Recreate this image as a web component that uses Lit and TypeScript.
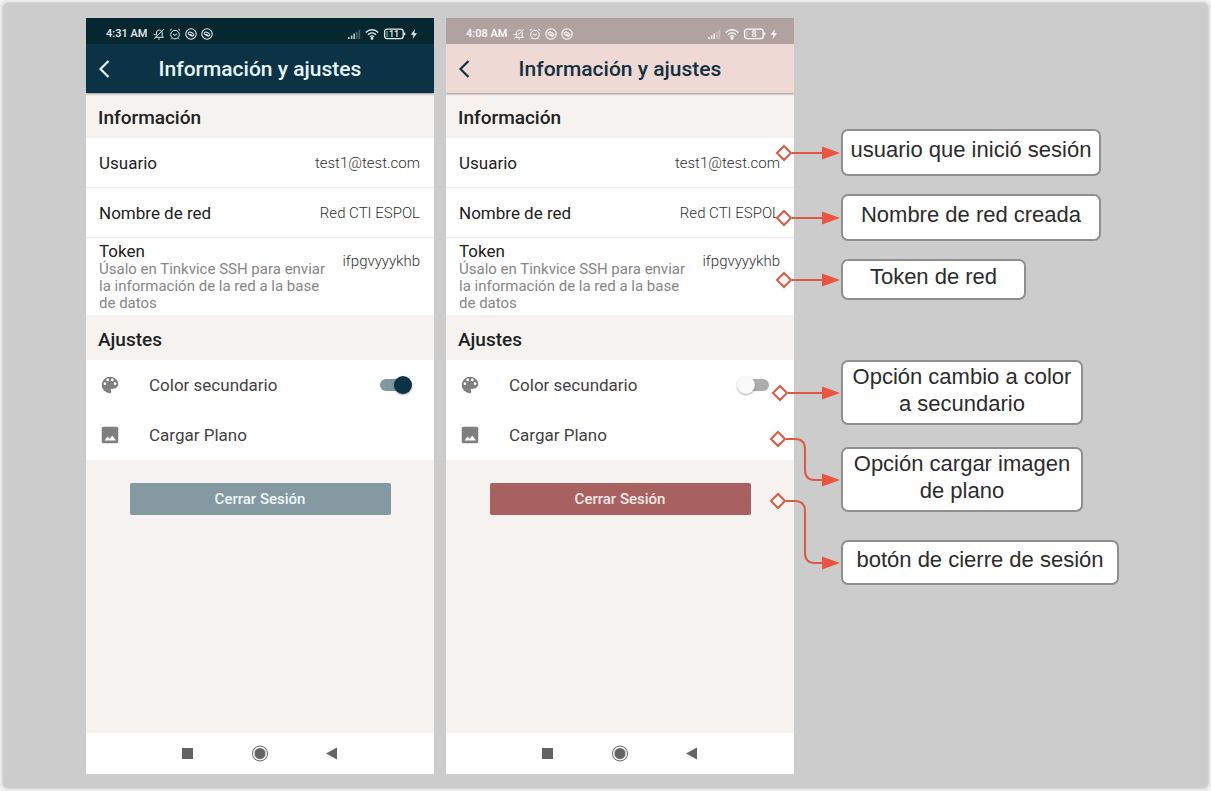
import { LitElement, html, svg, css } from "lit";
import { customElement, property } from "lit/decorators.js";
import { classMap } from "lit/directives/class-map.js";

@customElement("status-bar")
class StatusBar extends LitElement {
  @property() time = "";
  @property() battery = "";
  @property({ type: Boolean }) low = false;

  static styles = css`
    :host {
      display: flex;
      align-items: center;
      gap: 4px;
      height: 26px;
      box-sizing: border-box;
      padding: 6px 16px 0 20px;
      font: 500 11px/16px Roboto, sans-serif;
    }
    .time { margin-right: 2px; }
    .spacer { flex: 1; }
    svg { display: block; fill: none; stroke: currentColor; }
    .battery { font: 500 9px Roboto, sans-serif; }
    .battery text { fill: currentColor; stroke: none; }
  `;

  private shazam() {
    return html`<svg width="12" height="12" viewBox="0 0 12 12" stroke-width="1.1" aria-hidden="true">
      <circle cx="6" cy="6" r="5.2" />
      <path d="M3 5.400C3.800 3.400 6 3.400 9 6.400M9 6.600C8.200 8.800 6 8.600 3 5.600M5.200 5.800l2 2" />
    </svg>`;
  }

  render() {
    return html`
      <span class="time">${this.time}</span>
      <svg width="12" height="12" viewBox="0 0 12 12" aria-hidden="true">
        <path d="M2.200 9.300h8.200L9.200 7.800V5c0-1.600-1-2.800-2.600-3M3.400 7.400V5c0-1.600 1.200-3 3.200-3M5.200 11h1.600M1.200 10.600 10.800 1.200M.6 6.600h2" />
      </svg>
      <svg width="12" height="12" viewBox="0 0 12 12" aria-hidden="true">
        <circle cx="6" cy="6.600" r="4.300" />
        <path d="M4 6l2 1.300L8 5.800M.8 2.600 2.800.9M11.200 2.600 9.200.9M2.800 10.300l-1 1M9.200 10.300l1 1" />
      </svg>
      ${this.shazam()} ${this.shazam()}
      <span class="spacer"></span>
      <svg width="14" height="12" viewBox="0 0 14 12" stroke-width="1.600" aria-hidden="true">
        <path d="M1.800 9V11M4.600 7.600V11M7.200 5.600V11" opacity=".8" />
        <path d="M9.800 3.800V11M12.400 1.800V11" opacity=".3" />
      </svg>
      <svg width="14" height="12" viewBox="0 0 14 12" stroke-width="1.400" aria-hidden="true">
        <path d="M.8 4.400C4.400.9 9.600.9 13.200 4.400M3 6.700c2.300-2.200 5.700-2.200 8 0M5 8.800c1.200-1.100 2.800-1.100 4 0" />
        <circle cx="7" cy="10.400" r=".7" />
      </svg>
      <svg class="battery" width="23" height="12" viewBox="0 0 23 12" aria-hidden="true">
        <rect x="1.600" y="1.200" width="18.600" height="9.400" rx="2.400" stroke-width="1.300" />
        <path d="M21.600 4.600v2.600" stroke-width="1.400" />
        ${this.low ? svg`<path d="M4 3v6" stroke="#5fae5a" stroke-width="1.400" />` : svg`<path d="M4 3v6" stroke-opacity=".5" />`}
        <text x="11" y="9" text-anchor="middle">${this.battery}</text>
      </svg>
      <svg width="8" height="12" viewBox="0 0 8 12" aria-hidden="true">
        <path d="M5 1 .8 6.800h2.800L2.600 11 7 5.200H4.200z" fill="currentColor" stroke="none" />
      </svg>
    `;
  }
}

@customElement("phone-screen")
class PhoneScreen extends LitElement {
  @property() time = "";
  @property() battery = "";
  @property({ type: Boolean }) secondary = false;

  static styles = css`
    :host { display: block; }
    .phone {
      --status: #b2a29f;
      --status-ink: #ffffff;
      --bar: #eed9d5;
      --bar-ink: #14303f;
      --action: #a96060;
      --action-ink: #fbe9e6;
      display: flex;
      flex-direction: column;
      height: 100%;
      background: #f5f2f0;
      color: #212121;
      font-family: Roboto, sans-serif;
    }
    .phone.dark {
      --status: #062630;
      --status-ink: #e6eef0;
      --bar: #0c3345;
      --bar-ink: #e6f6fa;
      --action: #8499a2;
      --action-ink: #eef6f9;
    }
    status-bar { background: var(--status); color: var(--status-ink); }
    .appbar {
      display: grid;
      grid-template-columns: 36px 1fr 36px;
      align-items: center;
      height: 49px;
      background: var(--bar);
      color: var(--bar-ink);
      box-shadow: 0 1px 2px rgba(0, 0, 0, 0.4);
      clip-path: inset(0 0 -4px);
    }
    .appbar h1 { margin: 0; text-align: center; font-size: 21px; line-height: 24px; font-weight: 500; }
    .back { display: grid; place-items: center; height: 100%; padding: 0; border: 0; background: none; color: inherit; }
    .back svg { fill: none; stroke: currentColor; stroke-width: 2.2; }
    h2 { margin: 0; padding: 5px 12px 0; font-size: 19px; line-height: 40px; font-weight: 500; }
    .list { margin: 0; background: #fff; }
    .row {
      display: flex;
      align-items: center;
      min-height: 50px;
      box-sizing: border-box;
      padding: 0 14px 0 13px;
      border-bottom: 1px solid #ececec;
      font-size: 17px;
      line-height: 20px;
    }
    .row dt { flex: 1; }
    .row dd { margin: 0; font-size: 15px; font-weight: 300; color: #303030; }
    .row.token { align-items: flex-start; padding-top: 3px; padding-bottom: 3px; border: 0; }
    .token dd { padding-top: 10px; }
    .hint { display: block; max-width: 230px; color: #868686; font-size: 15px; line-height: 17px; }
    .setting {
      display: grid;
      grid-template-columns: 22px 1fr auto;
      column-gap: 28px;
      align-items: center;
      width: 100%;
      height: 50px;
      box-sizing: border-box;
      padding: 0 22px 0 13px;
      border: 0;
      background: none;
      color: #424242;
      font: 400 17px/20px Roboto, sans-serif;
      text-align: left;
    }
    .setting svg { fill: #7f7f7f; }
    .switch {
      appearance: none;
      position: relative;
      display: flex;
      align-items: center;
      width: 35px;
      height: 18px;
      margin: 0;
    }
    .switch::before {
      content: "";
      flex: 1;
      height: 12px;
      margin: 0 3px;
      border-radius: 6px;
      background: #adadad;
    }
    .switch::after {
      content: "";
      position: absolute;
      left: 0;
      width: 18px;
      height: 18px;
      border-radius: 50%;
      background: #fafafa;
      box-shadow: 0 1px 2px rgba(0, 0, 0, 0.35);
    }
    .switch:checked::before { background: #8096a0; }
    .switch:checked::after { left: auto; right: 0; background: #0c3345; }
    .logout {
      width: 75%;
      height: 32px;
      margin: 23px auto 0;
      border: 0;
      border-radius: 2px;
      background: var(--action);
      color: var(--action-ink);
      font: 500 15px/20px Roboto, sans-serif;
    }
    .nav {
      display: flex;
      justify-content: center;
      align-items: center;
      gap: 54px;
      height: 41px;
      margin-top: auto;
      background: #fff;
    }
    .nav button { display: grid; padding: 0; border: 0; background: none; }
    .nav svg { fill: #636363; }
  `;

  render() {
    return html`
      <div class=${classMap({ phone: true, dark: !this.secondary })}>
        <status-bar time=${this.time} battery=${this.battery} ?low=${!this.secondary}></status-bar>
        <header class="appbar">
          <button class="back" aria-label="Atrás">
            <svg width="14" height="20" viewBox="0 0 14 20"><path d="M11.500 2 3.500 10l8 8" /></svg>
          </button>
          <h1>Información y ajustes</h1>
        </header>
        <h2>Información</h2>
        <dl class="list">
          <div class="row"><dt>Usuario</dt><dd>test1@test.com</dd></div>
          <div class="row"><dt>Nombre de red</dt><dd>Red CTI ESPOL</dd></div>
          <div class="row token">
            <dt>Token<span class="hint">Úsalo en Tinkvice SSH para enviar la información de la red a la base de datos</span></dt>
            <dd>ifpgvyyykhb</dd>
          </div>
        </dl>
        <h2>Ajustes</h2>
        <div class="list">
          <label class="setting">
            <svg width="22" height="22" viewBox="0 0 24 24" aria-hidden="true">
              <path d="M12 3a9 9 0 0 0 0 18c.83 0 1.500-.67 1.500-1.500 0-.39-.15-.74-.39-1.010-.23-.26-.38-.61-.38-.99 0-.83.67-1.500 1.500-1.500H16c2.760 0 5-2.240 5-5 0-4.420-4.030-8-9-8zm-5.500 9a1.500 1.500 0 1 1 0-3 1.500 1.500 0 0 1 0 3zm3-4a1.500 1.500 0 1 1 0-3 1.500 1.500 0 0 1 0 3zm5 0a1.500 1.500 0 1 1 0-3 1.500 1.500 0 0 1 0 3zm3 4a1.500 1.500 0 1 1 0-3 1.500 1.500 0 0 1 0 3z" />
            </svg>
            <span>Color secundario</span>
            <input class="switch" type="checkbox" role="switch" .checked=${!this.secondary} />
          </label>
          <button class="setting">
            <svg width="22" height="22" viewBox="0 0 24 24" aria-hidden="true">
              <path d="M21 19V5c0-1.100-.9-2-2-2H5c-1.100 0-2 .9-2 2v14c0 1.100.9 2 2 2h14c1.100 0 2-.9 2-2zM9.500 13.500l2 2.500L14.500 12.500l4 5.500H6z" />
            </svg>
            <span>Cargar Plano</span>
          </button>
        </div>
        <button class="logout">Cerrar Sesión</button>
        <nav class="nav">
          <button aria-label="Recientes">
            <svg width="18" height="18" viewBox="0 0 18 18"><path d="M3 3h11v11H3z" /></svg>
          </button>
          <button aria-label="Inicio">
            <svg width="18" height="18" viewBox="0 0 18 18">
              <circle cx="9" cy="8.500" r="7.500" fill="none" stroke="#636363" />
              <circle cx="9" cy="8.500" r="5.500" />
            </svg>
          </button>
          <button aria-label="Volver">
            <svg width="18" height="18" viewBox="0 0 18 18"><path d="M3 8.500l11-6v12z" /></svg>
          </button>
        </nav>
      </div>
    `;
  }
}

interface Note {
  text: string;
  size: string;
  fromX: number;
  rise: number;
}

const FIELD_NOTES: Note[] = [
  { text: "usuario que inició sesión", size: "wide", fromX: 14, rise: 0 },
  { text: "Nombre de red creada", size: "wide", fromX: 14, rise: 0 },
  { text: "Token de red", size: "small", fromX: 14, rise: 0 },
];

const ACTION_NOTES: Note[] = [
  { text: "Opción cambio a color a secundario", size: "double", fromX: 10, rise: 0 },
  { text: "Opción cargar imagen de plano", size: "double", fromX: 8, rise: 41 },
  { text: "botón de cierre de sesión", size: "long", fromX: 8, rise: 62 },
];

@customElement("app-root")
class AppRoot extends LitElement {
  static styles = css`
    :host { display: block; min-height: 100vh; background: #f4f4f4; }
    .board {
      display: grid;
      grid-template-columns: minmax(300px, 348px) minmax(300px, 348px) 1fr;
      column-gap: 12px;
      min-height: 100vh;
      box-sizing: border-box;
      padding: 18px 12px 17px 86px;
      border-radius: 8px;
      background: #cccccc;
      box-shadow: inset 0 0 2px 2px #f0f0f0;
    }
    .notes {
      display: flex;
      flex-direction: column;
      gap: 60px;
      padding: 111px 0 0 35px;
    }
    .group { display: flex; flex-direction: column; align-items: flex-start; gap: 18px; }
    .group.actions { gap: 22px; }
    .note {
      position: relative;
      display: flex;
      align-items: center;
      justify-content: center;
      box-sizing: border-box;
      margin: 0;
      padding: 0 6px 6px;
      border: 2px solid #8f8f8f;
      border-radius: 7px;
      background: #fff;
      color: #2c2c2c;
      font: 22px/27px "Liberation Sans", Arial, sans-serif;
      text-align: center;
    }
    .wide { width: 260px; min-height: 47px; }
    .small { width: 185px; min-height: 41px; }
    .double { width: 242px; min-height: 65px; }
    .long { width: 278px; min-height: 45px; margin-top: 6px; }
    .link {
      position: absolute;
      top: 50%;
      right: 100%;
      width: 73px;
      height: 1px;
      overflow: visible;
      pointer-events: none;
      fill: none;
      stroke: #dc5a45;
      stroke-width: 2;
    }
    .diamond { fill: #fff; }
    .head { fill: #ea5440; stroke: none; }
  `;

  private note({ text, size, fromX, rise }: Note) {
    const y = -rise;
    const start = fromX + 8;
    const line = rise
      ? `M${start} ${y}H25q10 0 10 10V-10q0 10 10 10H53`
      : `M${start} 0H53`;
    return html`
      <p class="note ${size}">
        ${text}
        <svg class="link" viewBox="0 0 73 1" aria-hidden="true">
          <path d=${line} />
          <path class="diamond" d="M${fromX - 7} ${y}l7-7 7 7-7 7z" />
          <path class="head" d="M52-6.500 70 0 52 6.500z" />
        </svg>
      </p>
    `;
  }

  render() {
    return html`
      <main class="board">
        <phone-screen time="4:31 AM" battery="11"></phone-screen>
        <phone-screen time="4:08 AM" battery="8" secondary></phone-screen>
        <aside class="notes">
          <div class="group">${FIELD_NOTES.map((n) => this.note(n))}</div>
          <div class="group actions">${ACTION_NOTES.map((n) => this.note(n))}</div>
        </aside>
      </main>
    `;
  }
}
